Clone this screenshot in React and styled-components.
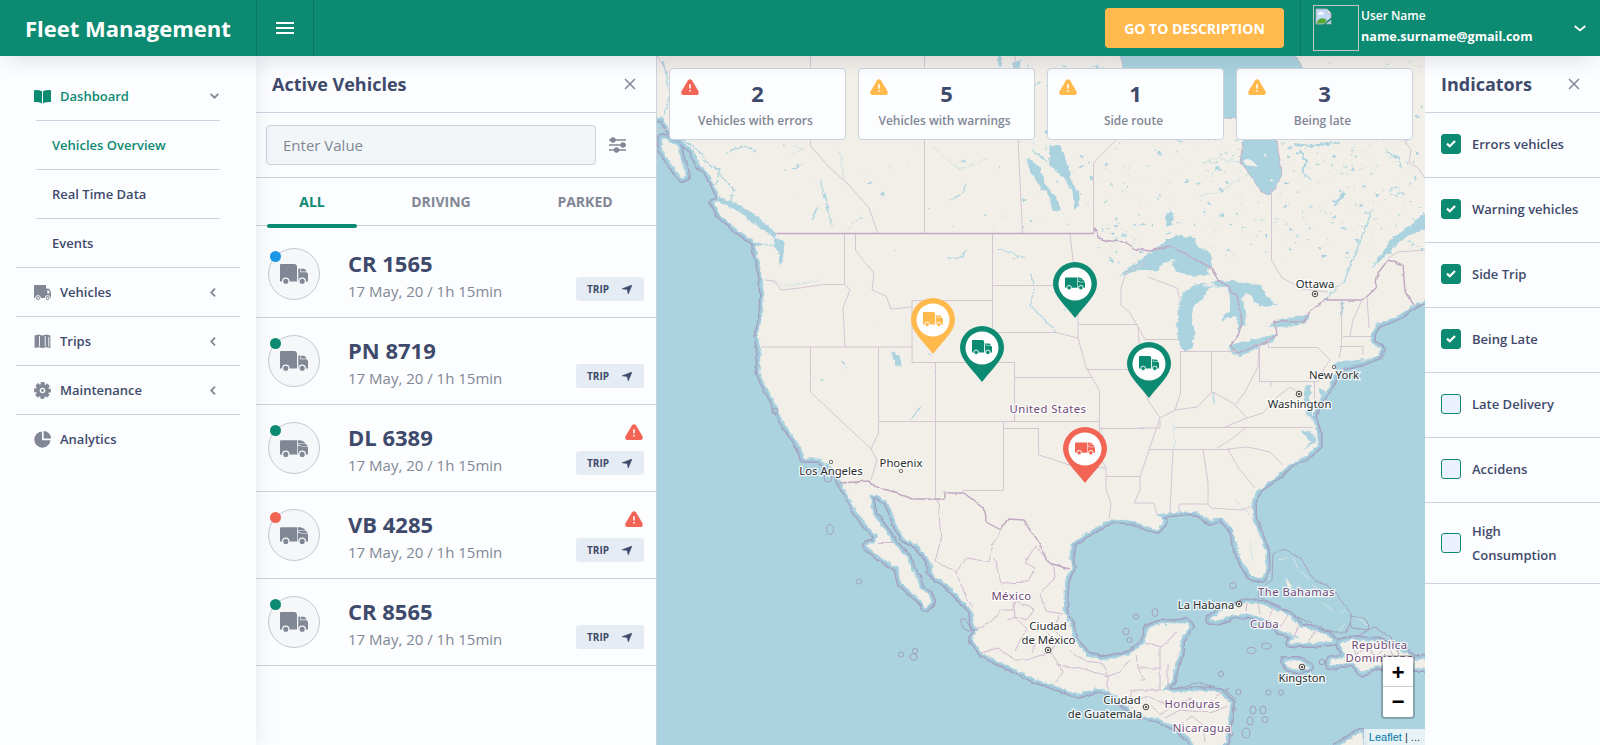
import React from "react";
import styled, { createGlobalStyle, css } from "styled-components";

const c = {
  green: "#0d8a72",
  ink: "#3e4a6b",
  grey: "#818794",
  line: "#cbd3df",
  page: "#fcfdff",
  yellow: "#ffb94d",
  red: "#f26555",
  blue: "#1a98e6",
};

const GlobalStyle = createGlobalStyle`
  *, *::before, *::after { box-sizing: border-box; }
  body {
    margin: 0;
    background: ${c.page};
    color: ${c.ink};
    font-family: "Open Sans", "Noto Sans", sans-serif;
    overflow: hidden;
  }
  button { font: inherit; color: inherit; border: 0; background: none; padding: 0; }
`;

const Shell = styled.div`
  display: flex;
  flex-direction: column;
  width: 1600px;
  height: 745px;
`;

/* ---------- Header ---------- */
const Header = styled.header`
  position: relative;
  z-index: 5;
  display: flex;
  flex: none;
  height: 56px;
  color: #fff;
  background: ${c.green};
  box-shadow: 0 12px 20px -8px rgba(60, 70, 100, 0.16);
`;
const Brand = styled.div`
  display: flex;
  align-items: center;
  width: 257px;
  padding-left: 25px;
  border-right: 1px solid #0a7767;
  font-size: 22px;
  font-weight: 700;
  line-height: 32px;
  white-space: nowrap;
`;
const MenuButton = styled.button`
  display: flex;
  flex-direction: column;
  justify-content: center;
  gap: 3px;
  width: 57px;
  padding-left: 19px;
  border-right: 1px solid #0a7767;
`;
const MenuBar = styled.span`
  width: 18px;
  height: 2px;
  background: #fff;
`;
const HeaderRight = styled.div`
  display: flex;
  align-items: center;
  margin-left: auto;
`;
const DescriptionButton = styled.button`
  width: 179px;
  height: 40px;
  margin-right: 16px;
  border-radius: 4px;
  background: ${c.yellow};
  font-size: 14px;
  font-weight: 700;
`;
const UserArea = styled.div`
  display: flex;
  width: 300px;
  height: 56px;
  padding: 5px 14px 5px 12px;
  border-left: 1px solid #0a7767;
`;
const Avatar = styled.div`
  width: 46px;
  height: 46px;
  padding: 2px 1px;
  border: 1px solid #c0c7c5;
`;
const UserText = styled.div`
  display: flex;
  flex-direction: column;
  margin: 0 auto 0 2px;
  font-size: 12px;
  font-weight: 600;
  line-height: 21px;
`;
const Email = styled.strong`
  font-size: 12.6px;
  font-weight: 700;
`;
const HeaderChevron = styled.svg`
  align-self: center;
  margin-top: 1px;
`;

/* ---------- Body ---------- */
const Body = styled.div`
  display: flex;
  flex: 1;
  min-height: 0;
`;
const Sidebar = styled.nav`
  position: relative;
  z-index: 2;
  flex: none;
  width: 256px;
  padding: 16px 16px 0;
  background: ${c.page};
  box-shadow: 4px 0 16px rgba(60, 70, 100, 0.09);
`;
const NavItem = styled.div`
  display: flex;
  align-items: center;
  height: 49px;
  margin: ${(p) => (p.$inset ? "0 20px" : 0)};
  padding: ${(p) => (p.$sub ? "0 0 0 16px" : p.$inset ? "0 1px 0 0" : "0 24px 0 18px")};
  border-bottom: 1px solid ${(p) => (p.$last ? "transparent" : c.line)};
  color: ${(p) => (p.$active ? c.green : c.ink)};
  font-size: 13px;
  font-weight: 600;
`;
const NavIcon = styled.svg`
  flex: none;
  width: 17px;
  height: 17px;
  margin: 0 9px 0 ${(p) => (p.$inset ? "-2px" : 0)};
  fill: ${(p) => (p.$inset ? c.green : c.grey)};
`;
const NavChevron = styled.svg`
  margin-left: auto;
`;

const Panel = styled.section`
  flex: none;
  background: ${c.page};
`;
const VehiclesPanel = styled(Panel)`
  width: 401px;
  border-right: 1px solid ${c.line};
`;
const PanelHeader = styled.div`
  display: flex;
  align-items: center;
  justify-content: space-between;
  height: 57px;
  padding: 0 20px 0 16px;
  border-bottom: 1px solid ${c.line};
`;
const PanelTitle = styled.h2`
  margin: 0 0 1px;
  font-size: 18px;
  font-weight: 700;
`;
const SearchRow = styled.div`
  display: flex;
  align-items: center;
  gap: 13px;
  height: 65px;
  padding-left: 10px;
  border-bottom: 1px solid ${c.line};
`;
const SearchInput = styled.input`
  width: 330px;
  height: 40px;
  padding: 0 16px;
  border: 1px solid ${c.line};
  border-radius: 4px;
  outline: 0;
  background: #f2f6f9;
  font: 15px "Open Sans", sans-serif;
  &::placeholder { color: ${c.grey}; opacity: 1; }
`;
const Tabs = styled.div`
  display: flex;
  height: 48px;
  border-bottom: 1px solid ${c.line};
`;
const Tab = styled.button`
  position: relative;
  width: ${(p) => p.$width}px;
  color: ${(p) => (p.$active ? c.green : c.grey)};
  font-size: 14px;
  font-weight: 700;
  ${(p) =>
    p.$active &&
    css`
      &::after {
        content: "";
        position: absolute;
        left: 11px;
        bottom: -3px;
        width: 90px;
        height: 4px;
        border-radius: 2px;
        background: ${c.green};
      }
    `}
`;
const VehicleList = styled.div`
  padding-top: 5px;
`;
const VehicleRow = styled.div`
  display: flex;
  align-items: center;
  height: 87px;
  padding: 0 12px;
  border-bottom: 1px solid ${c.line};
`;
const VehicleAvatar = styled.div`
  position: relative;
  display: flex;
  align-items: center;
  justify-content: center;
  width: 52px;
  height: 52px;
  margin-right: 28px;
  border: 1px solid #c6c9d4;
  border-radius: 50%;
  background: #f5f7f9;
`;
const StatusDot = styled.span`
  position: absolute;
  top: 2px;
  left: 1px;
  width: 11px;
  height: 11px;
  border-radius: 50%;
  background: ${(p) => p.$color};
`;
const VehicleText = styled.div`
  flex: 1;
  padding-top: 5px;
`;
const VehicleName = styled.div`
  font-size: 22px;
  font-weight: 700;
  line-height: 29px;
`;
const VehicleMeta = styled.div`
  color: ${c.grey};
  font-size: 15px;
  line-height: 26px;
`;
const VehicleSide = styled.div`
  display: flex;
  flex-direction: column;
  align-items: flex-end;
  justify-content: flex-end;
  gap: 11px;
  height: 54px;
`;
const WarningSlot = styled.div`
  height: 16px;
  padding-right: 1px;
  line-height: 0;
`;
const TripBadge = styled.button`
  display: flex;
  align-items: center;
  justify-content: space-between;
  width: 68px;
  height: 24px;
  padding: 0 12px 0 11px;
  border-radius: 3px;
  background: #e6ecf4;
  font-size: 10px;
  font-weight: 700;
`;

/* ---------- Map ---------- */
const MapArea = styled.main`
  position: relative;
  flex: 1;
  min-width: 0;
  overflow: hidden;
  background: #aad3df;
`;
const MapDrawing = styled.svg`
  display: block;
`;
const CountryLabel = styled.text`
  fill: #704a77;
  stroke: #fff;
  stroke-opacity: 0.85;
  stroke-width: 2.5px;
  paint-order: stroke;
  text-anchor: middle;
  font: 11.3px "Noto Sans", sans-serif;
  letter-spacing: 0.45px;
`;
const CityLabel = styled(CountryLabel)`
  fill: #2a2d2e;
  letter-spacing: 0;
`;
const StatRow = styled.div`
  position: absolute;
  top: 12px;
  left: 12px;
  display: flex;
  gap: 12px;
`;
const StatCard = styled.div`
  display: grid;
  grid-template-columns: 18px 1fr 18px;
  align-content: start;
  justify-items: center;
  width: 177px;
  height: 72px;
  padding: 10px 15px 0 11px;
  border: 1px solid ${c.line};
  border-radius: 4px;
  background: ${c.page};
`;
const StatValue = styled.div`
  padding-left: 4px;
  font-size: 22px;
  font-weight: 700;
  line-height: 29px;
`;
const StatLabel = styled.div`
  grid-column: 1 / -1;
  color: ${c.grey};
  font-size: 12px;
  font-weight: 600;
  line-height: 25px;
  white-space: nowrap;
`;
const Marker = styled.svg`
  position: absolute;
  left: ${(p) => p.$x}px;
  top: ${(p) => p.$y}px;
`;
const ZoomControl = styled.div`
  position: absolute;
  right: 10px;
  bottom: 26px;
  width: 34px;
  border: 2px solid rgba(0, 0, 0, 0.22);
  border-radius: 4px;
  background-clip: padding-box;
`;
const ZoomButton = styled.button`
  display: block;
  width: 30px;
  height: 30px;
  padding-top: 2px;
  background: #fff;
  color: #000;
  font: bold 22px/28px "Liberation Mono", monospace;
  &:first-child {
    padding-top: 3px;
    border-bottom: 1px solid #ccc;
    border-radius: 2px 2px 0 0;
    line-height: 30px;
  }
  &:last-child {
    border-radius: 0 0 2px 2px;
    line-height: 30px;
  }
`;
const Attribution = styled.div`
  position: absolute;
  right: 0;
  bottom: 0;
  height: 16px;
  padding: 0 5px;
  background: rgba(255, 255, 255, 0.7);
  color: #333;
  font: 11px/16px "Liberation Sans", sans-serif;
`;
const LeafletLink = styled.span`
  color: #0078a8;
`;

/* ---------- Indicators ---------- */
const IndicatorsPanel = styled(Panel)`
  width: 175px;
`;
const IndicatorRow = styled.label`
  display: flex;
  align-items: center;
  min-height: 65px;
  padding: ${(p) => (p.$tall ? "16px 14px 16px" : "14px 14px 16px")} 16px;
  border-bottom: 1px solid ${c.line};
  font-size: 13px;
  font-weight: 600;
  line-height: 24px;
`;
const CheckBox = styled.span`
  display: flex;
  flex: none;
  align-items: center;
  justify-content: center;
  width: 20px;
  height: 20px;
  margin-right: 11px;
  border: 1px solid ${c.green};
  border-radius: 3px;
  background: ${(p) => (p.$on ? c.green : "#ebf0ff")};
`;

/* ---------- Icons ---------- */
const Close = () => (
  <svg width="12" height="12" viewBox="0 0 12 12" stroke={c.grey} strokeWidth="1.5">
    <path d="M1 1 11 11M11 1 1 11" />
  </svg>
);
const Warning = ({ color }) => (
  <svg width="18" height="16" viewBox="0 0 18 16">
    <path d="M7.1 1.2Q9 -.9 10.9 1.2L17.4 12Q18.8 16 15.6 16H2.4Q-.8 16 .6 12Z" fill={color} />
    <path d="M9 5.2V9.6M9 11V12.6" stroke="#fff" strokeWidth="1.6" />
  </svg>
);
const TruckShape = ({ van, ring }) => (
  <>
    {van ? (
      <>
        <path d="M0 3.2Q0 2.2 1 2.2H17V16.5H0Z" />
        <path d="M17.7 2.2H20.500Q23.500 2.500 25.600 5.200H17.700ZM17.700 5.700H26L27.500 8H21.500L17.700 6.200ZM17.700 7.200 21.200 8.600H27.800L28 10V16.500H17.700Z" />
      </>
    ) : (
      <>
        <path d="M0 1Q0 0 1 0H15Q17 .5 17 2.6V17.5H0Z" />
        <path d="M18.3 4.5H20V8.2H26.6L28 9.8V17.5H18.3ZM20.6 4.800H24Q25.800 5.300 26.600 7.500H20.600Z" />
      </>
    )}
    <g stroke={ring} strokeWidth="1.3">
      <circle cx="5.8" cy={van ? 16.4 : 17.3} r="3.2" />
      <circle cx="22.2" cy={van ? 16.4 : 17.3} r="3.2" />
    </g>
  </>
);
const Truck = ({ van }) => (
  <svg width="28" height="21" viewBox="0 0 28 21" fill={c.grey}>
    <TruckShape van={van} ring="#f5f7f9" />
  </svg>
);
const Arrow = () => (
  <svg width="10" height="9" viewBox="0 0 9 9" preserveAspectRatio="none" fill={c.ink}>
    <path d="M0 3.8 9 0 5.6 9 4.7 4.6Z" stroke={c.ink} strokeWidth=".5" />
  </svg>
);
const Sliders = () => (
  <svg width="17" height="16" viewBox="0 0 17 16" fill={c.grey} stroke={c.grey} strokeWidth="1.6">
    <path d="M0 3H17M0 8H17M0 13H17" />
    <circle cx="4" cy="3" r="1.9" />
    <circle cx="14" cy="8" r="1.9" />
    <circle cx="7.5" cy="13" r="1.9" />
  </svg>
);
const Check = () => (
  <svg width="10" height="8" viewBox="0 0 10 8" fill="none" stroke="#fff" strokeWidth="2.2">
    <path d="M1 3.6 3.8 6.3 9 1" />
  </svg>
);
const ImageGlyph = () => (
  <svg width="17" height="17" viewBox="0 0 17 17">
    <path d="M1 1H12L16 5V10L9 16H1Z" fill="#c5d8f7" stroke="#a7adb0" />
    <path d="M3 6Q3 4.5 5 4.5Q6 3 7.5 4.5Q9 5 8.5 6.5H3Z" fill="#fff" />
    <path d="M1.5 15Q4 9 9 10.5L12 12 9 15.5H1.5Z" fill="#54a934" />
    <path d="M12 1V5H16Z" fill="#fff" stroke="#a7adb0" strokeWidth=".7" />
    <path d="M17 9 8 17H10L17 11Z" fill={c.green} />
    <path d="M16 12V16H11Z" fill="#c5d8f7" stroke="#a7adb0" strokeWidth=".6" />
  </svg>
);

const navIcons = {
  book: <path d="M0 2.2Q4.5 1.6 8 3.3V15.3Q4.5 13.6 0 14ZM17 2.2Q12.5 1.6 9 3.3V15.3Q12.5 13.6 17 14Z" />,
  truck: (
    <>
      <path d="M0 1.5Q0 1 .8 1H12V4.6H14.6Q16.8 6.3 17 9V14H0Z" />
      <path d="M13.3 6.2H14.3Q15.7 7.4 15.6 9.4H13.3Z" fill={c.page} />
      <g stroke={c.page} strokeWidth="1">
        <circle cx="4" cy="14" r="2.4" />
        <circle cx="13.7" cy="14" r="2.4" />
      </g>
      <circle cx="4" cy="14" r=".9" fill={c.page} />
      <circle cx="13.7" cy="14" r=".9" fill={c.page} />
    </>
  ),
  map: (
    <>
      <path d="M.6 2.5 4.7 1.6 8.5 2.5 12.3 1.6 16.4 2.5V15L12.3 14.2 8.5 15.1 4.7 14.2.6 15Z" />
      <path d="M5.5 3V13.6M11.2 3V13.6M14.8 4V13.6" stroke={c.page} strokeWidth=".9" />
    </>
  ),
  gear: (
    <>
      <circle cx="8.5" cy="8.5" r="6.6" />
      <circle cx="8.5" cy="8.5" r="6.9" fill="none" stroke={c.grey} strokeWidth="3" strokeDasharray="3.8 1.62" strokeDashoffset="1.9" />
      <circle cx="8.5" cy="8.5" r="2.8" fill={c.page} />
      <circle cx="8.5" cy="8.5" r="1.4" />
    </>
  ),
  pie: (
    <>
      <path d="M8 .5A8.1 8.1 0 1 0 16.5 9.2H8Z" />
      <path d="M9.6 0A7.6 7.6 0 0 1 17 7.6H9.6Z" />
    </>
  ),
};

const navItems = [
  { label: "Dashboard", icon: "book", inset: true, active: true, arrow: "down" },
  { label: "Vehicles Overview", inset: true, sub: true, active: true },
  { label: "Real Time Data", inset: true, sub: true },
  { label: "Events", sub: true },
  { label: "Vehicles", icon: "truck", arrow: "left" },
  { label: "Trips", icon: "map", arrow: "left" },
  { label: "Maintenance", icon: "gear", arrow: "left" },
  { label: "Analytics", icon: "pie", last: true },
];
const NavLabel = styled.span`
  margin-left: ${(p) => (p.$indent ? 20 : 0)}px;
`;

const vehicles = [
  { name: "CR 1565", dot: c.blue },
  { name: "PN 8719", dot: c.green },
  { name: "DL 6389", dot: c.green, van: true, warn: true },
  { name: "VB 4285", dot: c.red, van: true, warn: true },
  { name: "CR 8565", dot: c.green },
];
const stats = [
  ["2", "Vehicles with errors", c.red],
  ["5", "Vehicles with warnings", c.yellow],
  ["1", "Side route", c.yellow],
  ["3", "Being late", c.yellow],
];
const markers = [
  { x: 396, y: 206, color: c.green, van: true },
  { x: 254, y: 242, color: c.yellow },
  { x: 303, y: 270, color: c.green },
  { x: 470, y: 286, color: c.green },
  { x: 406, y: 371, color: c.red, van: true },
];
const indicators = [
  ["Errors vehicles", true],
  ["Warning vehicles", true],
  ["Side Trip", true],
  ["Being Late", true],
  ["Late Delivery", false],
  ["Accidens", false],
  ["High Consumption", false],
];

/* Coastlines */
const mainland =
  "M640 40V112L657 118 663 116 668 128 680 138 693 150 699 163 708 173 716 187 721 198 739 207 756 217 769 227 777 235 774 240 777 246 756 246 758 257 763 277 764 297 763 317 758 333 761 353 760 370 764 383 774 400 779 412 784 423 793 435 801 447 804 458 819 458 829 465 838 475 842 484 849 497 858 513 869 527 878 537 874 543 867 545 874 553 886 560 898 568 901 582 913 593 923 602 925 608 931 602 928 595 919 588 918 580 911 570 908 558 901 552 893 543 886 532 879 523 873 515 871 505 869 494 878 495 888 502 893 513 898 527 904 538 918 545 928 557 933 567 931 573 946 583 958 595 968 605 973 612 974 625 978 630 973 638 981 652 996 660 1016 669 1033 678 1054 685 1078 694 1096 688 1109 690 1119 698 1129 708 1140 715 1158 718 1177 727 1190 738 1197 750H1208L1225 742 1228 720 1230 703 1220 693 1200 691 1172 693 1162 690 1172 680 1175 663 1180 653 1180 640 1189 627 1187 623 1157 625 1147 630 1145 643 1130 655 1101 661 1086 655 1073 640 1069 623 1063 610 1065 580 1071 568 1069 557 1071 543 1086 533 1103 523 1114 519 1136 522 1157 530 1163 521 1157 514 1183 511 1198 512 1210 520 1221 516 1233 529 1237 545 1243 562 1253 577 1262 577 1266 568 1265 550 1258 533 1252 517 1252 499 1258 490 1277 475 1288 465 1307 455 1318 445 1316 430 1312 417 1319 400 1329 387 1334 373 1343 366 1363 361 1378 355 1380 349 1371 343 1371 333 1378 323 1397 316 1413 305 1440 295V40Z";
const islands = [
  "M714 203 726 200 743 210 759 227 774 237 773 245 756 242 736 228 719 213Z",
  "M662 138 678 146 680 158 686 176 682 178 671 163 662 150Z",
  "M1210 620 1227 608 1247 603 1263 605 1287 615 1300 627 1327 635 1333 641 1313 643 1290 643 1295 637 1280 630 1270 620 1247 613 1233 615 1217 620Z",
  "M1340 643 1353 640 1383 643 1400 650 1411 657 1400 665 1377 665 1362 672 1353 662 1330 665 1330 660 1347 658Z",
  "M1285 661 1298 661 1309 667 1300 670 1288 667Z",
  "M1415 660H1430V668H1415Z",
  "M1333 750 1362 732V750Z",
];

const stateLines =
  "M844.5 234V284L850 290 843 308 845 347M855.5 234V250L863 260 874 273 872 290 886 296 891 309 912 307M766 280 775 281 781 290 800 288 823 284.5H844.5M761 347H912M912 300.5H992M912 300V362.5H1014.5M992.5 234V332M992 285.5H1060M992 332.5H1056L1078 338M1014.5 362V421M1014.5 377.5H1093M878.5 347V433L871 449 877 460 871 480M810.5 347V392L871 449M935.5 362V498M878.5 421.5H1099M1003.5 421V490.5H962.5M1003.5 428.5H1038.5V455L1049 458 1069 465 1106 468V490L1111 503 1109 519M1106 476.5H1140M1099.5 390V456L1106 468M1099 428.5H1145M1070 234 1073 260 1078 303V323L1078 338 1086 367 1099 390M1078 324.5H1138M1086 369.5H1127L1140 380 1148 400 1160 418 1150 447 1140 477 1140 490 1134 503H1154L1157 515M1146 262 1126 273 1121 288V305L1130 313 1138 327 1145 339.5H1180M1138 327 1140 355 1130 369M1148 277 1177 288 1180 300M1180.5 352V393L1175 410 1160 418M1180 351.5H1237M1211.5 352V392M1175 410 1197 407 1212 392 1233 403 1247 418 1263 413 1277 397 1290 387 1300 393M1236 404 1245 392 1258 367 1259 343M1259.5 343V381.5H1318M1268.5 338V347.5H1318L1330 360 1323 370 1318 382M1138 428H1160V420M1175 427.5H1313M1150 449.5H1230M1173 449 1170 513M1203 449 1208 483V503M1179 512V504H1208L1211 508 1241 510 1250 507M1217 448 1230 440 1247 427M1228 450 1240 470 1255 488M1228 449 1247 447 1257 449 1270 452 1283 465M1225 427 1247 418M1271 387V382M1314.5 382V401H1319M1341.5 300V347L1339 358M1362 300 1353 320 1350 336M1343 336.5H1371M1339 346.5H1363V355M1367 297 1369 328M810.5 56V146L829 167 849 185 869 208 878 233M924.5 56V233M1015 56 1018 140 1022.5 233M1093.5 233V163L1116 140M1271.5 188V260L1282 278 1303 289 1328 292M1388 258 1398 252 1413 251 1425 250M657 129.5H671M657 56 668 73M1404 140 1411 150 1409 163 1417 167 1425 178";
const mexicoLines =
  "M938 500 941 540 935 561 956 572 967 558 989 562 994 540 1001 530M994 558 1001 583 1028 582 1034 568 1025 563 1036 546 1054 568 1055 577 1040 594 1046 611 1063 614M956 572 967 600 973 607M974 630 992 622 1000 610 1013 610 1016 602 1034 609 1027 620 1018 617 1007 620M1013 602 1014 617 1027 629 1020 640 1015 651M981 652 998 648 1015 660H1027L1050 652 1057 660 1062 672 1054 685M1036 642 1032 653M1042 628 1055 640 1050 655M1060 615 1053 630 1064 641 1072 637M1070 651 1085 661 1101 663 1108 676 1120 672 1130 660M1057 665 1080 668 1108 676V690M1145 643 1160 647 1172 637 1178 632M1160 647V690M1136 655 1138 668 1145 681H1140M1139 668H1161M1161 690H1130V705L1145 718M878 542.5H893M1160 715 1172 705 1190 698 1200 710 1222 693M1165 718 1180 710 1210 713 1228 706M1180 725 1192 716 1203 725 1205 742M1168 664V690M1135 700 1150 696 1165 705 1175 698M1150 705 1160 715M1190 698V708";

/* Deterministic scatter of small lakes across the northern forests. */
const makeLakes = () => {
  let seed = 17;
  const next = () => {
    seed = (seed * 16807) % 2147483647;
    return seed / 2147483647;
  };
  const areas = [
    [1095, 62, 325, 190, 330],
    [1210, 140, 210, 120, 130],
    [1015, 62, 80, 165, 60],
    [760, 145, 245, 85, 22],
    [1095, 225, 45, 40, 24],
    [775, 245, 290, 150, 16],
  ];
  return areas
    .flatMap(([x, y, w, h, n]) =>
      Array.from({ length: n }, () => {
        const a = x + next() * w;
        const b = y + next() * h;
        const s = 0.6 + next() * next() * 3;
        return `M${a.toFixed(1)} ${b.toFixed(1)}l${s.toFixed(1)} ${(-s * next()).toFixed(1)} ${(s * 0.7).toFixed(1)} ${(s * 0.6).toFixed(1)} ${(-s).toFixed(1)} ${(s * 0.5).toFixed(1)}z`;
      })
    )
    .join("");
};
const smallLakes = makeLakes();

const islets = [
  [830, 529.5, 3.5, 5], [859, 581.5, 2.6, 2.6], [901, 654.5, 2.6, 2.6], [915, 651, 2.6, 2.6], [913.5, 657, 3.5, 3.3],
  [1126, 631.5, 3, 3.3], [1129.5, 640, 2.6, 2.6], [1136, 616.5, 2.6, 2.6], [1155, 612.5, 3, 4],
  [1233, 585.5, 3.5, 3], [1251.5, 650.5, 4.5, 3], [1266.5, 646, 5, 3], [1221, 674, 2.6, 2.6], [1268.5, 692.5, 2.6, 2.6], [1281, 692.5, 2.6, 2.6],
  [1253, 710, 3, 4], [1263, 710, 3, 4], [1250, 721, 3, 4], [1265, 719.5, 3, 3], [1246, 733, 4, 5], [1322, 662, 2.8, 2.8],
  [1238.5, 692, 2.6, 2.6], [1234, 709, 2, 2], [1231, 734, 2, 2], [775, 411, 3, 3], [828, 478, 4, 4],
];
const capitals = [[1315, 294], [1299, 394], [1048, 650], [1239, 604], [1302, 667], [1146, 707]];
const towns = [[831, 462], [901, 471], [1334, 367]];
const cities = [
  ["Ottawa", 1315, 288], ["New York", 1334, 379], ["Washington", 1299.5, 408], ["Phoenix", 901, 467], ["Los Angeles", 831, 475],
  ["Ciudad", 1048, 630], ["de México", 1048.5, 643.5], ["La Habana", 1206, 608.5], ["Kingston", 1302, 681.5], ["Ciudad", 1122, 704], ["de Guatemala", 1105, 717.5],
];
const countries = [
  ["United States", 1048, 413], ["México", 1011.5, 599.5], ["The Bahamas", 1296.5, 596], ["Cuba", 1264.5, 628], ["República", 1379.5, 648.5],
  ["Dominicana", 1379.5, 662], ["Honduras", 1192.5, 708], ["Nicaragua", 1202, 731.5],
];

function MapPicture() {
  const coast = [mainland, ...islands].join("");
  return (
    <MapDrawing width="768" height="689" viewBox="657 56 768 689">
      <defs>
        <filter id="rough" x="640" y="40" width="800" height="720" filterUnits="userSpaceOnUse" colorInterpolationFilters="sRGB">
          <feTurbulence type="fractalNoise" baseFrequency=".2" numOctaves="3" seed="4" />
          <feDisplacementMap in="SourceGraphic" scale="5" xChannelSelector="R" yChannelSelector="G" />
        </filter>
        <filter id="wavy" x="640" y="40" width="800" height="720" filterUnits="userSpaceOnUse" colorInterpolationFilters="sRGB">
          <feTurbulence type="fractalNoise" baseFrequency=".1" numOctaves="2" seed="9" />
          <feDisplacementMap in="SourceGraphic" scale="4" xChannelSelector="R" yChannelSelector="G" />
        </filter>
      </defs>
      <g strokeLinejoin="round" fill="none" filter="url(#wavy)">
        <path d={coast} stroke="#a49fbd" strokeWidth="9.8" />
        <path d={coast} stroke="#a0c4d9" strokeWidth="7.4" />
        <path d={coast} stroke="#aad3df" strokeWidth="3.4" />
      </g>
      <path d={coast} fill="#f2efe9" stroke="#f2efe9" strokeWidth=".8" filter="url(#rough)" />

      <g fill="#aad3df" filter="url(#rough)">
        <path d={smallLakes} />
        <g transform="translate(656 50) scale(.33333)">
          <path d="M1180 285 1215 285 1235 345 1250 400 1270 435 1270 465 1255 480 1250 430 1225 385 1180 345ZM1112 330 1150 350 1165 400 1200 440 1215 480 1195 485 1180 440 1150 405 1125 370ZM705 905 730 915 738 945 720 950ZM1020 18 1040 20 1035 50 1025 45ZM1065 40 1095 30 1090 55 1070 55ZM355 560 385 575 380 640 368 645 370 610 355 590ZM185 440 240 460 300 495 345 535 355 560 310 535 250 485 190 455Z" />
        </g>
        <g transform="translate(1130 200) scale(.33333)">
          <path d="M-30 228 0 200 60 160 110 120 140 105 195 115 200 140 240 155 250 200 225 210 240 225 190 230 150 215 130 205 125 190 140 178 100 190 85 210 30 210ZM140 380 145 430 165 455 185 445 195 400 185 350 190 320 215 300 235 265 265 255 220 248 190 255 160 280 150 300ZM265 240 330 245 390 255 410 290 440 315 410 320 385 315 350 275 335 300 348 330 345 375 325 395 318 345 275 362 280 345 300 335 300 290 290 262 215 255ZM300 435 320 430 440 402 430 425 400 435 330 468 298 460ZM415 380 440 360 500 348 540 345 525 370 440 385ZM885 35 850 70 790 110 745 175 720 205 760 175 800 130 850 100 885 90ZM104 45 120 30 132 45 125 75 108 80ZM670 115 690 120 685 130ZM632 305 640 305 638 345 633 345ZM525 560 545 555 538 600 550 660 535 650 520 595ZM560 560 585 575 575 590ZM510 690 550 700 560 725 520 750 540 725ZM610 490 720 475 620 510Z" />
        </g>
      </g>
      <path
        d="M1118 50H1290L1297 58 1303 70 1280 115 1277 135 1278 150 1281 165 1282 175 1277 184 1274 190 1268 195 1261 191 1250 175 1240 163 1243 140 1240 119 1224 118 1180 110 1125 70Z"
        fill="#aad3df"
        stroke="#c3aec6"
        strokeWidth=".8"
        filter="url(#wavy)"
      />
      <path d="M1243 161Q1249 155 1258 167L1246 165ZM1264 153 1267 155 1265 157ZM1270 179 1274 180 1271 182Z" fill="#f2efe9" />

      <g fill="none" stroke="#aad3df" filter="url(#rough)">
        <path d="M663 60 670 95 664 115M675 80V125M684 140 700 152 712 168M702 160 720 170 716 185M724 154 742 146 756 151M720 175 734 190 730 202M792 170 802 164M820 180 827 205 832 227M812 220 817 208M950 200 962 194 966 184M948 259 962 256 967 250M997 249 1012 253 1025 258M1031 273 1034 290 1030 305 1045 320 1056 332M910 421 920 408M1213 392 1214 404M1372 210 1345 280 1325 300M1264 620 1280 631 1298 637" strokeWidth="1.2" />
        <path d="M1294 144 1312 146 1340 142M1300 150 1306 162 1302 172 1312 180M1385 150 1398 158 1402 168M1028 158 1040 168 1042 190M1033 150 1048 162M1026 92 1040 82" strokeWidth="1.8" />
        <path d="M790 145 803 149 790 155M840 150 844 180M860 215 848 230M932 146 960 170 990 157M765 280 790 286 822 280M1200 195 1220 192 1235 181 1250 175M1200 164 1215 158 1240 162M1098 420 1105 445M1173 421 1175 450M1235 500 1249 515M1250 540 1252 560" strokeWidth=".8" strokeOpacity=".6" />
        <circle cx="1394.5" cy="191" r="4.5" />
        <path d="M1335 205 1345 192" strokeWidth="3" />
      </g>

      <g fill="none" filter="url(#wavy)" strokeLinejoin="round">
        <path d={mexicoLines} stroke="#d0bccf" />
        <path d="M1093 234 1095 228 1098 238 1110 241 1125 242 1136 249 1150 251 1170 246 1212 269 1218 280 1237 295 1242 323 1237 337 1230 345 1237 353 1260 345 1277 335 1275 322 1303 322 1312 310 1325 300H1362L1375 288 1378 273 1388 260 1403 265 1405 292 1414 305M839 483 869 481 871 484 912 499H944V493H964L983 508 986 522 1001 530 1009 519 1023 520 1039 543 1049 563 1070 569" stroke="#bfa8c1" strokeWidth="1.4" />
        <path d="M1273 555 1284 549 1300 557 1312 577 1333 590 1352 615 1347 632 1333 632 1300 618 1277 605 1258 597V590L1272 580ZM1352 616 1362 617 1369 625 1368 630 1352 628 1350 621M1356 637 1374 627 1391 638 1400 655M1230 688 1226 690 1236 700M1178 688 1199 682 1215 688M960 620Q964 616 969 625T966 630Q960 627 960 620" stroke="#a49fbd" />
        <path d="M1247 603 1246 611M1258 603 1260 614M1274 608 1270 619M1288 615 1280 628M1300 625 1294 636M1315 631 1308 642M1352 643 1356 656 1366 646 1376 657 1388 645 1396 660" stroke="#d0b9cd" />
      </g>
      <path d={stateLines} fill="none" stroke="#d5c6d4" />
      <path d="M777 233.5H1093" stroke="#bfa8c1" strokeWidth="1.6" />
      <path d="M1278 560 1287 558M1293 558 1298 568M1300 571 1309 579M1312 585 1320 590M1323 603 1333 611M1341 613 1345 610M1339 631 1345 624M1358 618 1367 625M1286 578 1288 590 1292 587Z" fill="#f2efe9" stroke="#dbe5e3" strokeWidth="1" />
      <g fill="none" stroke="#a49fbd">
        {islets.map(([x, y, rx, ry]) => (
          <ellipse key={`${x}-${y}`} cx={x} cy={y} rx={rx} ry={ry} />
        ))}
      </g>
      <g fill="#f2efe9" stroke="#4a4a4a" strokeWidth="1">
        {[...capitals, ...towns].map(([x, y], i) => (
          <circle key={`${x}-${y}`} cx={x} cy={y} r={i < capitals.length ? 2.8 : 1.7} strokeOpacity={i < capitals.length ? 1 : 0.75} />
        ))}
      </g>
      {capitals.map(([x, y]) => (
        <circle key={`${x}-${y}`} cx={x} cy={y} r="1.1" fill="#333" />
      ))}
      {countries.map(([name, x, y]) => (
        <CountryLabel key={name} x={x} y={y}>{name}</CountryLabel>
      ))}
      {cities.map(([name, x, y]) => (
        <CityLabel key={name + x} x={x} y={y}>{name}</CityLabel>
      ))}
    </MapDrawing>
  );
}

export default function App() {
  return (
    <Shell>
      <GlobalStyle />
      <Header>
        <Brand>Fleet Management</Brand>
        <MenuButton aria-label="Menu">
          <MenuBar />
          <MenuBar />
          <MenuBar />
        </MenuButton>
        <HeaderRight>
          <DescriptionButton>GO TO DESCRIPTION</DescriptionButton>
          <UserArea>
            <Avatar><ImageGlyph /></Avatar>
            <UserText>
              <span>User Name</span>
              <Email>name.surname@gmail.com</Email>
            </UserText>
            <HeaderChevron width="12" height="7" viewBox="0 0 12 7" fill="none" stroke="#fff" strokeWidth="1.8">
              <path d="M.7 1 6 5.4 11.3 1" />
            </HeaderChevron>
          </UserArea>
        </HeaderRight>
      </Header>

      <Body>
        <Sidebar>
          {navItems.map((n) => (
            <NavItem key={n.label} $inset={n.inset} $sub={n.sub} $active={n.active} $last={n.last}>
              {n.icon && (
                <NavIcon viewBox="0 0 17 17" $inset={n.inset}>{navIcons[n.icon]}</NavIcon>
              )}
              <NavLabel $indent={n.sub && !n.inset}>{n.label}</NavLabel>
              {n.arrow === "down" && (
                <NavChevron width="9" height="6" viewBox="0 0 9 6" fill="none" stroke={c.grey} strokeWidth="1.8">
                  <path d="M.6 .8 4.5 4.7 8.4 .8" />
                </NavChevron>
              )}
              {n.arrow === "left" && (
                <NavChevron width="6" height="9" viewBox="0 0 6 9" fill="none" stroke={c.grey} strokeWidth="1.8">
                  <path d="M5 .7 1.2 4.5 5 8.3" />
                </NavChevron>
              )}
            </NavItem>
          ))}
        </Sidebar>

        <VehiclesPanel>
          <PanelHeader>
            <PanelTitle>Active Vehicles</PanelTitle>
            <Close />
          </PanelHeader>
          <SearchRow>
            <SearchInput placeholder="Enter Value" />
            <Sliders />
          </SearchRow>
          <Tabs>
            <Tab $active $width={112}>ALL</Tab>
            <Tab $width={146}>DRIVING</Tab>
            <Tab $width={142}>PARKED</Tab>
          </Tabs>
          <VehicleList>
            {vehicles.map((v) => (
              <VehicleRow key={v.name}>
                <VehicleAvatar>
                  <Truck van={v.van} />
                  <StatusDot $color={v.dot} />
                </VehicleAvatar>
                <VehicleText>
                  <VehicleName>{v.name}</VehicleName>
                  <VehicleMeta>17 May, 20 / 1h 15min</VehicleMeta>
                </VehicleText>
                <VehicleSide>
                  {v.warn && <WarningSlot><Warning color={c.red} /></WarningSlot>}
                  <TripBadge>TRIP <Arrow /></TripBadge>
                </VehicleSide>
              </VehicleRow>
            ))}
          </VehicleList>
        </VehiclesPanel>

        <MapArea>
          <MapPicture />
          {markers.map((m) => (
            <Marker key={`${m.x}-${m.y}`} $x={m.x} $y={m.y} width="44" height="56" viewBox="0 0 44 56">
              <path d="M22 0A22 22 0 0 0 0 22C0 33 12 43 22 56C32 43 44 33 44 22A22 22 0 0 0 22 0Z" fill={m.color} />
              <circle cx="22" cy="22" r="16.5" fill="#fff" />
              <g transform="translate(12 14) scale(.715)" fill={m.color}>
                <TruckShape van={m.van} ring="#fff" />
              </g>
            </Marker>
          ))}
          <StatRow>
            {stats.map(([value, label, color]) => (
              <StatCard key={label}>
                <Warning color={color} />
                <StatValue>{value}</StatValue>
                <StatLabel>{label}</StatLabel>
              </StatCard>
            ))}
          </StatRow>
          <ZoomControl>
            <ZoomButton>+</ZoomButton>
            <ZoomButton>−</ZoomButton>
          </ZoomControl>
          <Attribution><LeafletLink>Leaflet</LeafletLink> | ...</Attribution>
        </MapArea>

        <IndicatorsPanel>
          <PanelHeader>
            <PanelTitle>Indicators</PanelTitle>
            <Close />
          </PanelHeader>
          {indicators.map(([label, on]) => (
            <IndicatorRow key={label} $tall={label === "High Consumption"}>
              <CheckBox $on={on}>{on && <Check />}</CheckBox>
              <span>{label}</span>
            </IndicatorRow>
          ))}
        </IndicatorsPanel>
      </Body>
    </Shell>
  );
}
